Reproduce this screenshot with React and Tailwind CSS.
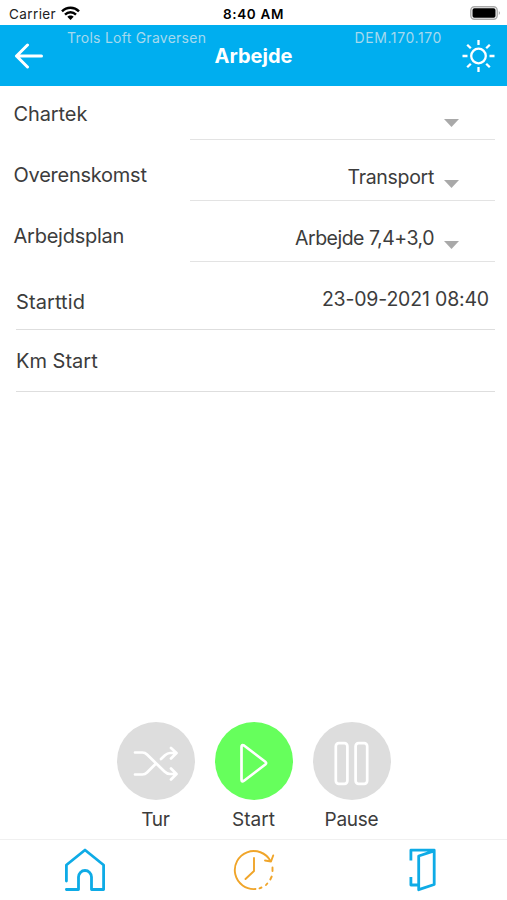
import React from "react";

function SelectRow({ label, value, height, labelClass, valueClass }) {
  return (
    <div className={`flex items-end justify-between pl-[13.5px] pr-[12px] ${height}`}>
      <div className={`h-full flex items-end pb-[14px] leading-6 ${labelClass}`}>{label}</div>
      <div className="h-full w-[305px] border-b border-[#e3e3e3] flex items-end justify-end pr-[36px]">
        <span className={`leading-6 pb-[11px] mr-[10px] ${valueClass}`}>{value}</span>
        <svg className="mb-[12px]" width="15" height="8" viewBox="0 0 15 8">
          <path d="M0 0H15L7.5 8Z" fill="#a9a9a9" />
        </svg>
      </div>
    </div>
  );
}

function Action({ label, color, labelClass, children }) {
  return (
    <div className="w-[78px] flex flex-col items-center">
      <div className={`w-[78px] h-[78px] rounded-full ${color}`}>
        <svg width="78" height="78" viewBox="0 0 78 78" fill="none" stroke="#fff" strokeWidth="2.7" strokeLinecap="round" strokeLinejoin="round">
          {children}
        </svg>
      </div>
      <span className={`mt-[8px] leading-6 whitespace-nowrap text-[19px] ${labelClass}`}>{label}</span>
    </div>
  );
}

export default function App() {
  return (
    <div className="w-[507px] h-[900px] bg-white text-[#3c3c3c] text-[20px] flex flex-col overflow-hidden font-['Inter','Liberation_Sans',sans-serif]">
      <div className="h-[25px] shrink-0 grid grid-cols-3 items-center text-[#222] pt-[3px]">
        <div className="flex items-center pl-[9px] text-[13.5px] leading-5">
          <span className="tracking-[0.4px]">Carrier</span>
          <svg className="ml-[5px] mb-[3px]" width="19" height="14" viewBox="0 0 19 14" fill="none" stroke="#000" strokeWidth="2.5">
            <path d="M1 5.3C5.8 .6 13.2 .6 18 5.3" />
            <path d="M4 8.6C7.2 5.6 11.8 5.6 15 8.6" />
            <path d="M6.3 10.8C8 9.1 11 9.1 12.7 10.8L9.5 14Z" fill="#000" stroke="none" />
          </svg>
        </div>
        <div className="text-center text-[13.5px] font-semibold leading-5 text-black tracking-[0.65px]">8:40 AM</div>
        <div className="flex justify-end pr-[6px] pb-[3px]">
          <svg width="31" height="14" viewBox="0 0 31 14">
            <rect x=".8" y=".8" width="26.4" height="12.4" rx="3.6" fill="#fff" stroke="#aaa" strokeWidth="1.4" />
            <rect x="2.5" y="2.3" width="23" height="9.4" rx="1.8" fill="#000" />
            <path d="M28.8 5Q31.2 7 28.8 9Z" fill="#aaa" />
          </svg>
        </div>
      </div>

      <header className="h-[61px] shrink-0 bg-[#00aeef] grid grid-cols-[1fr_auto_1fr] text-[#a5d9ee] text-[14px]">
        <div className="flex items-start">
          <svg className="ml-[14px] mt-[18px]" width="30" height="26" viewBox="0 0 30 26" fill="none" stroke="#fff" strokeWidth="3" strokeLinecap="round" strokeLinejoin="round">
            <path d="M27.5 13H2.5M13.5 2L2.5 13L13.5 24" />
          </svg>
          <span className="ml-[23px] mt-[3px] leading-5 whitespace-nowrap tracking-[0.25px]">Trols Loft Graversen</span>
        </div>
        <h1 className="mt-[19px] text-[20px] leading-6 font-bold text-white">Arbejde</h1>
        <div className="flex items-start justify-end">
          <span className="mt-[3px] leading-5 mr-[20px] whitespace-nowrap tracking-[0.6px]">DEM.170.170</span>
          <svg className="mt-[14px] mr-[12px]" width="33" height="33" viewBox="0 0 33 33" fill="none" stroke="#fff" strokeWidth="2.3">
            <circle cx="16.5" cy="17" r="7.3" />
            <path d="M16.5 1V6M16.5 28V33M.5 17H5.5M27.5 17H32.5M5.2 5.7L8.8 9.3M24.2 24.7L27.8 28.3M27.8 5.7L24.2 9.3M8.8 24.7L5.2 28.3" />
          </svg>
        </div>
      </header>

      <main className="flex-1">
        <SelectRow label="Chartek" value="" height="h-[54px]" labelClass="tracking-[-0.1px]" />
        <SelectRow label="Overenskomst" value="Transport" height="h-[61px]" labelClass="tracking-[-0.25px]" valueClass="text-[19.5px] tracking-[-0.3px]" />
        <SelectRow label="Arbejdsplan" value="Arbejde 7,4+3,0" height="h-[61px]" labelClass="tracking-[-0.25px]" valueClass="text-[19.5px] tracking-[-0.5px]" />
        <div className="ml-[16px] mr-[12px] h-[68px] border-b border-[#dedede] flex justify-between items-start pr-[6px]">
          <span className="leading-6 mt-[28px] tracking-[0.1px]">Starttid</span>
          <span className="leading-6 mt-[25px] text-[19.5px] tracking-[-0.18px]">23-09-2021 08:40</span>
        </div>
        <div className="ml-[16px] mr-[12px] h-[62px] border-b border-[#dedede]">
          <span className="block leading-6 pt-[19px]">Km Start</span>
        </div>
      </main>

      <div className="h-[117px] shrink-0 flex justify-center gap-[20px]">
        <Action label="Tur" color="bg-[#dddddd]" labelClass="tracking-[-0.2px]">
          <path d="M18 30.5H25.5Q28 30.5 30 32.5L47.5 49.5Q50 52 53 52H59M18 52.5H25.5Q28 52.5 30 50.5L38 42.5M44 37L48 33.2Q50.5 31 53 31H59M54 26L59.5 31L54 36.5M54 46.5L59.5 52L54 57.5" />
        </Action>
        <Action label="Start" color="bg-[#66ff5c]">
          <path d="M26.5 25V57.5Q26.5 60.5 29 58.7L50.3 42.5Q52 41 50.3 39.7L29 23.5Q26.5 22 26.5 25Z" />
        </Action>
        <Action label="Pause" color="bg-[#dddddd]" labelClass="tracking-[-0.25px]">
          <rect x="22.8" y="21.2" width="11.6" height="40.6" rx="3" />
          <rect x="42.6" y="21.2" width="11.6" height="40.6" rx="3" />
        </Action>
      </div>

      <nav className="h-[61px] shrink-0 border-t border-[#f0f0f0] grid grid-cols-3 justify-items-center pt-[8px]">
        <svg width="42" height="45" viewBox="0 0 42 45" fill="none" stroke="#0eabe6" strokeWidth="2.8" strokeLinecap="round" strokeLinejoin="round">
          <path d="M2.4 33V17L21 2L39.6 17V41.5H27.5V29A6.5 6.5 0 0 0 14.5 29V41.5H2.4" />
        </svg>
        <svg width="42" height="45" viewBox="0 0 42 45" fill="none" stroke="#f0a52a" strokeWidth="1.9" strokeLinecap="round" strokeLinejoin="round">
          <path d="M22.5 41A19 19 0 1 1 37.5 13" />
          <path d="M32 12.5L38 13.5L40.2 7.5M21 10V23L12.5 31" />
          <path d="M39.5 19.5V23M38.7 28.5L37.3 31.5M34.3 35.5L33 37M28.5 39.5L26.5 40.3" />
        </svg>
        <svg width="42" height="45" viewBox="0 0 42 45" fill="none" stroke="#0eabe6" strokeWidth="2.8" strokeLinejoin="round">
          <path d="M8.9 12.5V2.2H32.2V36.5L16.7 41.7V8L32.2 2.8M8.9 29V37H16" />
        </svg>
      </nav>
    </div>
  );
}
